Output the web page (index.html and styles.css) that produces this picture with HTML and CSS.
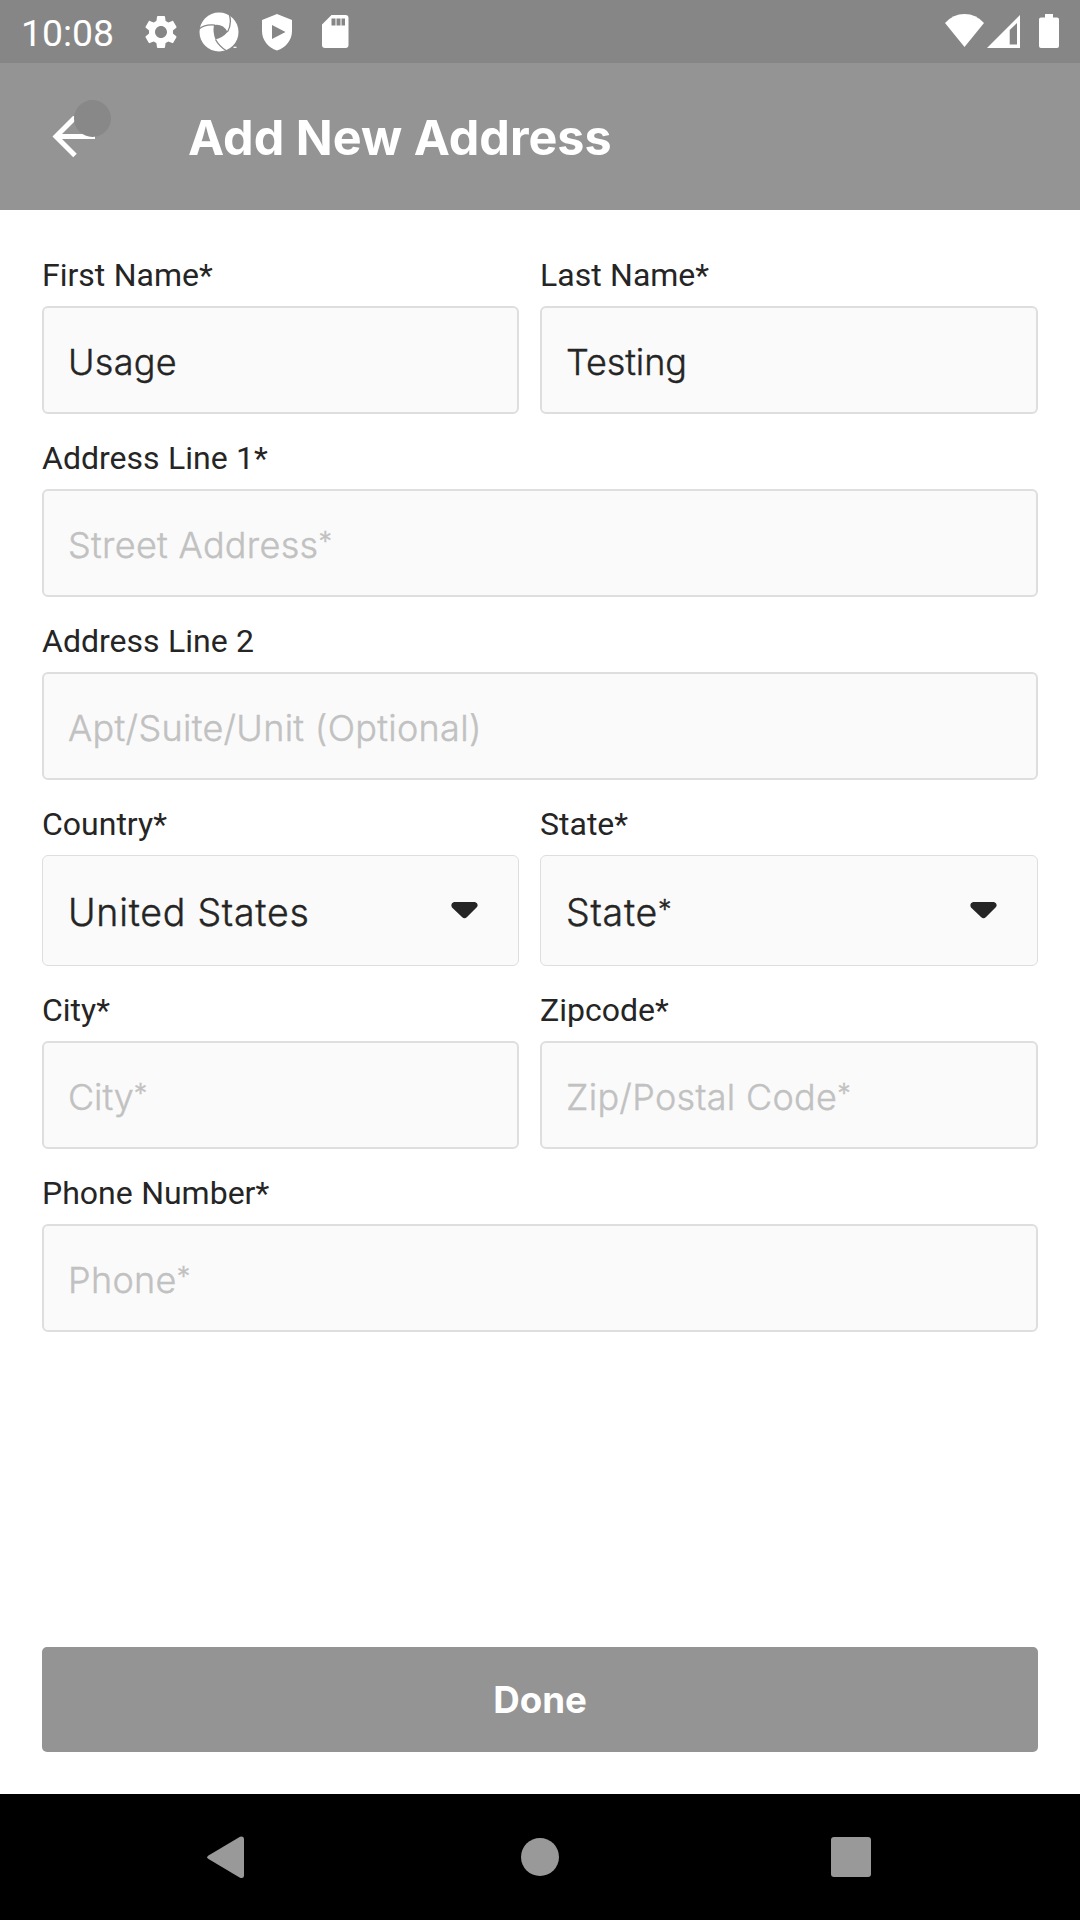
FILE: index.html
```
<!DOCTYPE html>
<html lang="en">
<head>
<meta charset="utf-8">
<title>Add New Address</title>
<link rel="stylesheet" href="styles.css">
</head>
<body>
<div class="screen">
  <div class="status-bar">
    <span class="clock">10:08</span>
    <svg class="gear" width="40" height="40" viewBox="0 0 24 24"><path d="M19.14 12.94c.04-.3.06-.61.06-.94 0-.32-.02-.64-.07-.94l2.03-1.58c.18-.14.23-.41.12-.61l-1.92-3.32c-.12-.22-.37-.29-.59-.22l-2.39.96c-.5-.38-1.03-.7-1.62-.94l-.36-2.54c-.04-.24-.24-.41-.48-.41h-3.84c-.24 0-.43.17-.47.41l-.36 2.54c-.59.24-1.13.57-1.62.94l-2.39-.96c-.22-.08-.47 0-.59.22L2.74 8.87c-.12.21-.08.47.12.61l2.03 1.58c-.05.3-.09.63-.09.94s.02.64.07.94l-2.03 1.58c-.18.14-.23.41-.12.61l1.92 3.32c.12.22.37.29.59.22l2.39-.96c.5.38 1.03.7 1.62.94l.36 2.54c.05.24.24.41.48.41h3.84c.24 0 .44-.17.47-.41l.36-2.54c.59-.24 1.13-.56 1.62-.94l2.39.96c.22.08.47 0 .59-.22l1.92-3.32c.12-.22.07-.47-.12-.61l-2.01-1.58zM12 15.6c-1.98 0-3.6-1.62-3.6-3.6s1.62-3.6 3.6-3.6 3.6 1.62 3.6 3.6-1.62 3.6-3.6 3.6z"/></svg>
    <svg class="swirl" width="40" height="40" viewBox="0 0 40 40">
      <circle cx="20" cy="20" r="19.5"/>
      <path class="cut" d="M15 13Q20 12 24 14.500Q27.500 17 28.500 20Q24 25.500 16.500 27.500Q13.500 20 15 13Z"/>
      <path class="groove" d="M0 17Q6 12 16 13.200M30.500 3Q33 12 28.500 20M16.500 27.500Q20 34 27 38.500"/>
      <path d="M34.500 34.700h3v1.200h-3z"/>
    </svg>
    <svg class="shield" width="30" height="37" viewBox="0 0 30 37"><path fill-rule="evenodd" d="M15 0L30 6V17C30 26 24 33.500 15 36.500C6 33.500 0 26 0 17V6ZM10 11V25L23.500 18Z"/></svg>
    <svg class="card" width="27" height="33" viewBox="0 0 27 33"><path fill-rule="evenodd" d="M9.500 0H23.500Q26.500 0 26.500 3V30Q26.500 33 23.500 33H3Q0 33 0 30V9.500ZM9.500 3.500V10.500H13.500V3.500ZM14.500 3.500V10.500H18.500V3.500ZM19.500 3.500V10.500H23V3.500Z"/></svg>
    <div class="signals">
      <svg class="wifi" width="39" height="33" viewBox="0 0 39 33"><path d="M0 9Q8 0 19.500 0T39 9L19.500 33Z"/></svg>
      <svg class="cell" width="33" height="33" viewBox="0 0 33 33"><path fill-rule="evenodd" d="M33 0V33H0ZM30 8L22.700 15V29.500H30Z"/></svg>
      <svg class="battery" width="20" height="34" viewBox="0 0 20 34"><path d="M6 0H14V3.500H18Q20 3.500 20 5.500V32Q20 34 18 34H2Q0 34 0 32V5.500Q0 3.500 2 3.500H6Z"/></svg>
    </div>
  </div>

  <header class="app-bar">
    <div class="back">
      <svg width="44" height="42" viewBox="0 0 44 42"><path d="M23 1.500L4 20.500L23 39.500M4.500 20.500H43"/></svg>
      <span class="touch-dot"></span>
    </div>
    <h1 class="title">Add New Address</h1>
  </header>

  <main class="form">
    <div class="row split">
      <div class="field"><div class="label">First Name*</div><div class="input">Usage</div></div>
      <div class="field"><div class="label">Last Name*</div><div class="input tight">Testing</div></div>
    </div>
    <div class="row">
      <div class="field"><div class="label">Address Line 1*</div><div class="input placeholder">Street Address<span class="star">*</span></div></div>
    </div>
    <div class="row">
      <div class="field"><div class="label">Address Line 2</div><div class="input placeholder">Apt/Suite/Unit (Optional)</div></div>
    </div>
    <div class="row split">
      <div class="field"><div class="label">Country*</div><div class="select"><span>United States</span><svg class="caret" width="27" height="17" viewBox="0 0 27 17"><path d="M3 0H24Q28 1.500 26 5L16 15Q13.500 17.500 11 15L1 5.500Q-1 1.500 3 0Z"/></svg></div></div>
      <div class="field"><div class="label">State*</div><div class="select"><span>State<span class="star">*</span></span><svg class="caret" width="27" height="17" viewBox="0 0 27 17"><path d="M3 0H24Q28 1.500 26 5L16 15Q13.500 17.500 11 15L1 5.500Q-1 1.500 3 0Z"/></svg></div></div>
    </div>
    <div class="row split">
      <div class="field"><div class="label">City*</div><div class="input placeholder tight">City<span class="star">*</span></div></div>
      <div class="field"><div class="label">Zipcode*</div><div class="input placeholder">Zip/Postal Code<span class="star">*</span></div></div>
    </div>
    <div class="row">
      <div class="field"><div class="label">Phone Number*</div><div class="input placeholder">Phone<span class="star">*</span></div></div>
    </div>
    <button class="done" type="button">Done</button>
  </main>

  <nav class="nav-bar">
    <svg width="38" height="43" viewBox="0 0 38 43"><path d="M1.500 19.500L33 .8Q37 -.5 37 3V39.500Q37 43 33 41.700L1.500 23Q-1 21.200 1.500 19.500Z"/></svg>
    <svg class="home" width="38" height="38" viewBox="0 0 38 38"><circle cx="19" cy="19" r="19"/></svg>
    <svg width="40" height="40" viewBox="0 0 40 40"><rect width="40" height="40" rx="3"/></svg>
  </nav>
</div>
</body>
</html>
```
FILE: styles.css
```
* { box-sizing: border-box; }

body {
  margin: 0;
  background: #fff;
  color: #252525;
  font-family: Inter, Lato, sans-serif;
}

svg { display: block; flex: none; }

.screen {
  display: flex;
  flex-direction: column;
  width: 1080px;
  height: 1920px;
  overflow: hidden;
}

/* System status bar */
.status-bar {
  display: flex;
  align-items: center;
  flex: none;
  height: 63px;
  padding: 0 21px;
  background: #868686;
  fill: #fff;
}

.clock {
  width: 120px;
  color: #fff;
  font: 37.3px/44px Roboto, sans-serif;
  padding-top: 2px;
}

.swirl { margin-left: 18px; }
.shield { margin: 1px 0 0 23px; }
.card { margin-left: 30px; }
.cut { fill: #868686; }
.groove { fill: none; stroke: #868686; stroke-width: 1.3; }

.signals {
  display: flex;
  align-items: center;
  margin-left: auto;
}

.wifi { margin-top: -2px; }
.cell { margin-left: 3px; margin-top: -1px; }
.battery { margin-left: 19px; margin-top: -1px; }

/* App bar */
.app-bar {
  display: flex;
  align-items: center;
  flex: none;
  height: 147px;
  padding-left: 52px;
  background: #949494;
}

.back {
  position: relative;
  width: 136px;
}

.back path { fill: none; stroke: #fff; stroke-width: 5; }

.touch-dot {
  position: absolute;
  left: 22px;
  top: -16px;
  width: 37px;
  height: 37px;
  border-radius: 50%;
  background: #888;
}

.title {
  margin: 3px 0 0;
  color: #fff;
  font-size: 48.5px;
  font-weight: 700;
  line-height: 60px;
}

/* Address form */
.form {
  display: flex;
  flex-direction: column;
  flex: 1;
  padding: 21px 42px 42px;
}

.row { display: grid; }
.split { grid-template-columns: 477px 498px; column-gap: 21px; }

.label {
  height: 75px;
  padding-top: 25px;
  font: 32px/38px Roboto, sans-serif;
  word-spacing: 0.5px;
}

.input,
.select {
  height: 108px;
  border: 2px solid #dedede;
  border-radius: 6px;
  background: #fafafa;
  padding: 32px 0 0 24px;
  font-size: 36px;
  font-weight: 300;
  -webkit-text-stroke: 0.4px currentColor;
  letter-spacing: 0.3px;
  line-height: 44px;
  white-space: nowrap;
}

.tight { letter-spacing: -0.1px; }

.placeholder { color: #c1c1c1; }

.select {
  display: flex;
  justify-content: space-between;
  height: 111px;
  border-width: 1px;
  padding: 35px 40px 0 25px;
  font-size: 37.5px;
  letter-spacing: 0.75px;
}

/* Required marker, set small and raised to the cap height */
.star {
  font-size: 27px;
  line-height: 0;
  vertical-align: 7px;
}

.caret { margin-top: 11px; fill: #252525; }

.done {
  height: 105px;
  margin-top: auto;
  padding: 0;
  border: 0;
  border-radius: 5px;
  background: #949494;
  color: #fff;
  font: 700 36.7px/44px Inter, Lato, sans-serif;
}

/* System navigation */
.nav-bar {
  display: flex;
  align-items: center;
  justify-content: space-between;
  flex: none;
  height: 126px;
  padding: 0 209px 0 207px;
  background: #000;
  fill: #999;
}

.home { margin-left: 3px; }
```
